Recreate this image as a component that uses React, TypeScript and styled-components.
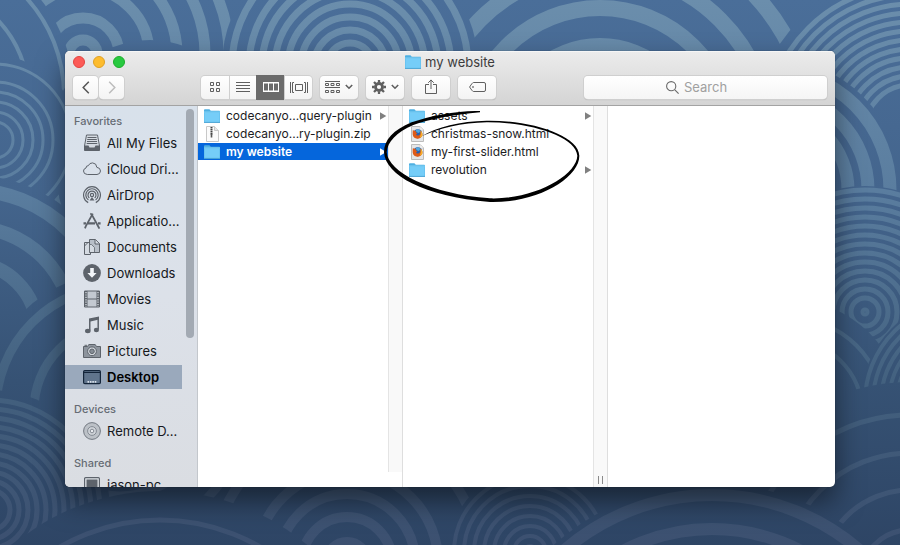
import React from 'react';
import styled, { createGlobalStyle, css } from 'styled-components';

const GlobalStyle = createGlobalStyle`
  *, *::before, *::after { box-sizing: border-box; }
  html, body, #root { height: 100%; }
  body {
    margin: 0;
    overflow: hidden;
    font-family: Inter, Roboto, sans-serif;
    font-size: 13px;
    color: #1c1c1e;
  }
  button { font: inherit; color: inherit; border: 0; margin: 0; padding: 0; background: none; text-align: left; }
  ul { list-style: none; margin: 0; padding: 0; }
`;

/* ---------- layout ---------- */

const Desktop = styled.main`
  position: relative;
  display: flex;
  height: 100%;
  padding: 51px 65px 58px;
  background: #3c597f;
`;

const Wallpaper = styled.svg`
  position: absolute;
  inset: 0;
  width: 100%;
  height: 100%;
`;

const Window = styled.section`
  position: relative;
  flex: 1;
  min-width: 0;
  display: flex;
  flex-direction: column;
  border-radius: 5px;
  overflow: hidden;
  background: #fff;
  box-shadow: 0 0 1px rgba(0, 0, 0, 0.5), 0 14px 28px rgba(0, 0, 0, 0.5);
`;

const Header = styled.header`
  flex: none;
  background: linear-gradient(#ececec, #d4d4d4);
  border-bottom: 1px solid #a3a3a3;
  box-shadow: inset 0 1px 0 #f6f6f6;
`;

const TitleBar = styled.div`
  display: grid;
  grid-template-columns: 1fr auto 1fr;
  align-items: center;
  height: 22px;
  padding: 0 8px;
`;

const Lights = styled.div`
  display: flex;
  gap: 8px;
`;

const Light = styled.button<{ $fill: string; $edge: string }>`
  width: 12px;
  height: 12px;
  border-radius: 50%;
  background: ${(p) => p.$fill};
  border: 1px solid ${(p) => p.$edge};
`;

const Title = styled.h1`
  display: flex;
  align-items: center;
  gap: 4px;
  margin: 0;
  font-size: 13px;
  font-weight: 400;
  line-height: 18px;
  color: #3c3c3c;
`;

const Toolbar = styled.div`
  display: flex;
  align-items: center;
  gap: 8px;
  height: 32px;
  padding: 0 8px 4px;
`;

const Group = styled.div<{ $space?: number }>`
  display: flex;
  gap: 1px;
  margin-right: ${(p) => p.$space ?? 0}px;
`;

const ToolButton = styled.button<{ $width: number; $active?: boolean; $edge?: 'left' | 'right' | 'none' }>`
  display: flex;
  align-items: center;
  justify-content: center;
  gap: 5px;
  width: ${(p) => p.$width}px;
  height: 23px;
  color: ${(p) => (p.$active ? '#fff' : '#5f5f5f')};
  background: ${(p) => (p.$active ? '#6b6b6b' : 'linear-gradient(#ffffff, #f3f3f3)')};
  box-shadow: 0 0 0 1px ${(p) => (p.$active ? '#6b6b6b' : '#cfcfcf')}, 0 1px 1px rgba(0, 0, 0, 0.25);
  border-radius: ${(p) =>
    p.$edge === 'left' ? '4px 0 0 4px' : p.$edge === 'right' ? '0 4px 4px 0' : p.$edge === 'none' ? '0' : '4px'};
`;

const SearchBox = styled.label`
  display: flex;
  align-items: center;
  gap: 5px;
  flex: 0 1 243px;
  min-width: 0;
  height: 23px;
  margin-left: auto;
  padding-left: 82px;
  border-radius: 4px;
  color: #6a6a6a;
  background: linear-gradient(#ffffff, #f5f5f5);
  box-shadow: 0 0 0 1px #cfcfcf, 0 1px 1px rgba(0, 0, 0, 0.2);
`;

const SearchInput = styled.input`
  flex: 1;
  min-width: 0;
  height: 20px;
  padding: 0;
  border: 0;
  outline: 0;
  background: none;
  font: inherit;
  &::placeholder { color: #a0a0a0; opacity: 1; }
`;

const Body = styled.div`
  flex: 1;
  min-height: 0;
  display: flex;
`;

/* ---------- sidebar ---------- */

const Sidebar = styled.nav`
  flex: none;
  display: flex;
  justify-content: space-between;
  width: 133px;
  overflow: hidden;
  border-right: 1px solid #c3c7cc;
  background: linear-gradient(#d8e1eb, #dce1e9 50%, #dadde2);
`;

const SideLists = styled.div`
  width: 117px;
  height: 0;
`;

const SideHeading = styled.h2<{ $first?: boolean }>`
  margin: 0;
  padding: ${(p) => (p.$first ? '6px' : '10px')} 0 0 9px;
  font-size: 11px;
  font-weight: 500;
  line-height: 18px;
  color: #666c74;
`;

const SideRow = styled.li`
  padding: 1px 0;
`;

const SideItem = styled.button<{ $selected?: boolean }>`
  display: flex;
  align-items: center;
  gap: 6px;
  width: 100%;
  height: 24px;
  padding-left: 18px;
  white-space: nowrap;
  color: #15181c;
  ${(p) => p.$selected && css`
    background: #9aa9bc;
    color: #000;
    font-weight: 600;
  `}
`;

const ScrollThumb = styled.div`
  width: 8px;
  height: 229px;
  margin: 3px 3px 0 0;
  border-radius: 4px;
  background: #a3aab3;
`;

/* ---------- columns ---------- */

const Column = styled.div`
  position: relative;
  flex: 0 0 205px;
  display: flex;
`;

const FileList = styled.ul`
  flex: 1;
  min-width: 0;
  padding-top: 1px;
`;

const Gutter = styled.div<{ $short?: boolean }>`
  display: flex;
  align-items: flex-end;
  justify-content: center;
  width: 15px;
  border-right: 1px solid #dedede;
  color: #8a8a8a;
  &::before {
    content: '';
    align-self: stretch;
    width: 15px;
    margin-bottom: ${(p) => (p.$short ? '15px' : '0')};
    border-left: 1px solid #e4e4e4;
    background: #f9f9f9;
  }
  svg { position: absolute; right: 5px; bottom: 3px; }
`;

const FileRow = styled.button<{ $selected?: boolean }>`
  display: flex;
  align-items: center;
  width: 100%;
  height: 17px;
  margin-bottom: 1px;
  padding: 0 1px 0 6px;
  white-space: nowrap;
  ${(p) => p.$selected && css`
    color: #fff;
    background: #0566dc;
    font-weight: 600;
  `}
`;

const FileIcon = styled.span`
  display: flex;
  justify-content: center;
  flex: none;
  width: 16px;
  margin-right: 6px;
`;

const FileName = styled.span`
  flex: 1;
  font-size: 12px;
  line-height: 16px;
`;

const Preview = styled.div`
  flex: 1;
`;

const Marker = styled.svg`
  position: absolute;
  left: -23px;
  top: -1px;
  width: 220px;
  height: 105px;
  pointer-events: none;
  z-index: 1;
`;

/* ---------- icons ---------- */

const Folder = () => (
  <svg width="16" height="14" viewBox="0 0 16 14" aria-hidden="true">
    <path d="M0 1.2Q0 .3 .9 .3H5.4L6.8 1.8H15.2Q16 1.8 16 2.6V13.6H0Z" fill="#4fb0e2" />
    <path d="M.3 3.4H15.7V13H.3Z" fill="#75cdf8" />
    <path d="M0 3H16" stroke="#91dafc" strokeWidth=".8" />
    <path d="M0 13.4H16" stroke="#4ba5d5" />
  </svg>
);

const Zip = () => (
  <svg width="13" height="16" viewBox="0 0 13 16" aria-hidden="true">
    <path d="M.5 .5H8.5L12.5 4.5V15.5H.5Z" fill="#fbfbfb" stroke="#c8c8c8" />
    <path d="M8.5 .5V4.5H12.5" fill="#e8e8e8" stroke="#c8c8c8" />
    <path d="M5.5 1V9" stroke="#444" strokeWidth="2" strokeDasharray="1.5 .5" />
    <path d="M5.5 8V11.5" stroke="#555" strokeWidth="1.6" />
  </svg>
);

const Html = () => (
  <svg width="13" height="16" viewBox="0 0 13 16" aria-hidden="true">
    <path d="M.5 .5H9L12.5 4V15.5H.5Z" fill="#e5e6e8" stroke="#bcbcbc" />
    <path d="M9 .5V4H12.5Z" fill="#fff" stroke="#c9c9c9" strokeWidth=".6" />
    <circle cx="6.7" cy="7.8" r="4.5" fill="#2760ae" />
    <path d="M4.6 4.2Q7 2.8 9.4 4.8L8 7L5.6 6.2Z" fill="#51a9df" />
    <path d="M1.9 4L3.6 5L4.6 4.6L5 6.6L6.4 7.5L5 8.4Q5.8 10 8 9.2Q10 8 9.4 4.4Q12.1 7 11.2 10Q9.4 13.1 6.3 12.8Q2.2 12 1.7 8.4Q1.5 6 1.9 4Z" fill="#df5a17" />
    <path d="M9.4 4.4Q12.1 7 11.2 10Q10 11.6 8.8 11.8Q10.7 8.2 9.4 4.4Z" fill="#f6b22b" />
  </svg>
);

const Arrow = ({ fill = '#808080' }: { fill?: string }) => (
  <svg width="8" height="8" viewBox="0 0 8 8" aria-hidden="true"><path d="M1 .3L7.3 4L1 7.7Z" fill={fill} /></svg>
);

const Chevron = ({ dir, color }: { dir: 'left' | 'right'; color: string }) => (
  <svg width="8" height="13" viewBox="0 0 8 13" fill="none" stroke={color} strokeWidth="1.5" aria-hidden="true">
    <path d={dir === 'left' ? 'M6.8 .8L1.2 6.5L6.8 12.2' : 'M1.2 .8L6.8 6.5L1.2 12.2'} />
  </svg>
);

const Down = () => (
  <svg width="8" height="6" viewBox="0 0 8 6" fill="none" stroke="currentColor" strokeWidth="1.6" aria-hidden="true">
    <path d="M.8 1L4 4.2L7.2 1" />
  </svg>
);

const GridIcon = () => (
  <svg width="11" height="11" viewBox="0 0 11 11" fill="none" stroke="currentColor" aria-hidden="true">
    <path d="M.5 .5H3.5V3.5H.5ZM6.5 .5H9.5V3.5H6.5ZM.5 6.5H3.5V9.5H.5ZM6.5 6.5H9.5V9.5H6.5Z" />
  </svg>
);

const ListIcon = () => (
  <svg width="14" height="10" viewBox="0 0 14 10" stroke="currentColor" aria-hidden="true">
    <path d="M0 .5H14M0 3.5H14M0 6.5H14M0 9.5H14" />
  </svg>
);

const ColumnsIcon = () => (
  <svg width="16" height="10" viewBox="0 0 16 10" fill="none" stroke="currentColor" aria-hidden="true">
    <path d="M.5 0V10M15.5 0V10M5.5 0V10M10.5 0V10" />
    <path d="M0 .8H16M0 9.2H16" strokeWidth="1.6" />
  </svg>
);

const FlowIcon = () => (
  <svg width="18" height="11" viewBox="0 0 18 11" fill="none" stroke="currentColor" aria-hidden="true">
    <path d="M.5 0V11M17.5 0V11M4 .5H2.5V10.5H4M14 .5H15.5V10.5H14M5.5 2.5H12.5V8.5H5.5Z" />
  </svg>
);

const ArrangeIcon = () => (
  <svg width="15" height="13" viewBox="0 0 15 13" fill="none" stroke="currentColor" aria-hidden="true">
    <path d="M0 .5H15M0 6.5H15M.5 2.5H3.5V4.5H.5ZM6 2.5H9V4.5H6ZM11.5 2.5H14.5V4.5H11.5ZM.5 9.5H3.5V11.5H.5ZM6 9.5H9V11.5H6ZM11.5 9.5H14.5V11.5H11.5Z" />
  </svg>
);

const GearIcon = () => (
  <svg width="14" height="14" viewBox="0 0 14 14" fill="none" stroke="currentColor" aria-hidden="true">
    <circle cx="7" cy="7" r="3.5" strokeWidth="2.8" />
    <path d="M7 0V2.6M7 11.4V14M0 7H2.6M11.4 7H14M2 2L4 4M10 10L12 12M12 2L10 4M4 10L2 12" strokeWidth="2.3" />
  </svg>
);

const ShareIcon = () => (
  <svg width="12" height="16" viewBox="0 0 12 16" fill="none" stroke="currentColor" aria-hidden="true">
    <path d="M4 5.5H.5V14.5H11.5V5.5H8M6 .8V10M3.2 3.8L6 1L8.8 3.8" />
  </svg>
);

const TagIcon = () => (
  <svg width="17" height="10" viewBox="0 0 17 10" fill="none" stroke="currentColor" aria-hidden="true">
    <path d="M4.3 .5H15Q16.5 .5 16.5 2V8Q16.5 9.5 15 9.5H4.3Q3.5 9.5 .6 5Q3.5 .5 4.3 .5Z" />
    <circle cx="4" cy="5" r=".5" />
  </svg>
);

const SearchIcon = () => (
  <svg width="13" height="13" viewBox="0 0 13 13" fill="none" stroke="currentColor" strokeWidth="1.1" aria-hidden="true">
    <circle cx="5.2" cy="5.2" r="4.6" />
    <path d="M8.6 8.6L12.6 12.6" />
  </svg>
);

const SIDE_ICONS: Record<string, React.ReactNode> = {
  files: (
    <>
      <path d="M3.5 1H14.5L16.5 12V16.5H1.5V12Z" fill="#d4dae1" stroke="#5d636b" />
      <path d="M4.5 3.5H13.5M4.2 5.5H13.8M4 7.5H14M3.7 9.5H14.3" stroke="#5d636b" />
      <path d="M1.5 11.5H5.5L6.5 13.5H11.5L12.5 11.5H16.5V16.5H1.5Z" fill="#5d636b" />
    </>
  ),
  cloud: <path d="M4.3 14.5Q.5 14.2 .5 11Q.6 8.6 3 8Q3 5.6 5.3 5.7Q6.5 2.8 9.6 2.9Q13.6 3.2 13.8 7.3Q17.5 7.8 17.5 11Q17.3 14.3 14 14.5Z" stroke="#5d636b" />,
  airdrop: (
    <g stroke="#5d636b" strokeWidth="1.2">
      <path d="M5.2 16.6A8.4 8.4 0 1 1 12.8 16.6" />
      <path d="M5.4 14A6.2 6.2 0 1 1 12.6 14" />
      <path d="M6.3 12A4 4 0 1 1 11.7 12" />
      <circle cx="9" cy="9" r="1.6" />
      <path d="M9 11L6.5 14.5H11.5Z" fill="#5d636b" stroke="none" />
    </g>
  ),
  apps: (
    <g stroke="#5d636b" strokeWidth="1.8">
      <path d="M9.8 1.6L2.6 14.6L2 16.4M7.4 2.6L8.6 1.4M9.2 3.4L15.4 14.8L16.4 16.6" />
      <path d="M.5 11.3H3M5 11.3H12M15 11.3H17.6" strokeWidth="2.2" />
    </g>
  ),
  docs: (
    <g stroke="#5d636b" fill="#d4dae1">
      <path d="M1.5 4.5H7.5V16.5H1.5Z" />
      <path d="M6.5 1.5H12.5L16.5 5.5V14.5H6.5Z" fill="#b8bfc8" />
      <path d="M12 1.5V6H16.5M1.5 8L5 4.5" />
      <path d="M6.5 14V6.5H8.5L11.5 9.5V14" strokeWidth=".8" />
    </g>
  ),
  down: (
    <>
      <circle cx="9" cy="9" r="8.9" fill="#5d636b" />
      <path d="M7.2 4H10.8V9H13.6L9 13.8L4.4 9H7.2Z" fill="#f2f5f8" />
    </>
  ),
  film: (
    <>
      <path d="M1.5 1H16.5V17H1.5Z" fill="#c3c9d1" stroke="#5d636b" />
      <path d="M3 1V17M15 1V17" stroke="#5d636b" strokeWidth="3" />
      <path d="M3 2V17M15 2V17" stroke="#e2e6eb" strokeWidth="1.2" strokeDasharray="1.2 1.2" />
      <path d="M4 9H14" stroke="#5d636b" />
    </>
  ),
  music: (
    <>
      <path d="M6 2.6L16 .6V3.6L7.5 5.4V14.5H6Z" fill="#5d636b" />
      <path d="M15.2 1V13.4" stroke="#5d636b" strokeWidth="1.5" />
      <ellipse cx="4.8" cy="15" rx="2.8" ry="2.2" fill="#5d636b" />
      <ellipse cx="13.4" cy="14" rx="2.6" ry="2.2" fill="#5d636b" />
    </>
  ),
  camera: (
    <>
      <path d="M.5 4.5H4.5L5.8 2.5H12.2L13.5 4.5H17.5V15.5H.5Z" fill="#8d949d" stroke="#5d636b" />
      <path d="M1.5 3.3H4" stroke="#5d636b" />
      <circle cx="9" cy="9.3" r="4.4" fill="#d3d8de" stroke="#5d636b" />
      <circle cx="9" cy="9.3" r="2.3" fill="#868d96" stroke="#5d636b" />
    </>
  ),
  desktop: (
    <>
      <rect x=".6" y="2.6" width="16.8" height="13" rx="1.2" fill="#60748c" stroke="#14253a" strokeWidth="1.2" />
      <path d="M1 4.5H17" stroke="#14253a" />
      <path d="M4.5 13.8H13.8" stroke="#dae2eb" strokeWidth="1.7" strokeDasharray="1.6 .8" />
    </>
  ),
  disc: (
    <>
      <circle cx="9" cy="9" r="8.4" fill="#bcc1c7" stroke="#737982" />
      <circle cx="9" cy="9" r="4.4" fill="#d0d4d9" stroke="#858b94" />
      <circle cx="9" cy="9" r="1.8" fill="#e8ebef" stroke="#858b94" />
    </>
  ),
  computer: (
    <>
      <rect x="1.6" y="1.6" width="14.8" height="15" rx="1" fill="#e0e4e9" stroke="#5d636b" strokeWidth="1.2" />
      <rect x="3.5" y="3.5" width="11" height="12" fill="#5d636b" />
    </>
  ),
};

const SideIcon = ({ name }: { name: string }) => (
  <svg width="18" height="18" viewBox="0 0 18 18" fill="none" aria-hidden="true">{SIDE_ICONS[name]}</svg>
);

/* ---------- wallpaper ---------- */

type Wave = { x: number; y: number; base: number; width: number; radii: number[] };

const steps = (from: number, to: number, by: number) => {
  const out: number[] = [];
  for (let r = from; r <= to; r += by) out.push(r);
  return out;
};

const WAVES: Wave[] = [
  { x: 83, y: 54, base: 158, width: 11, radii: [14, 36, 66, 94, 122, 146] },
  { x: -80, y: 95, base: 154, width: 4, radii: [108, 144] },
  { x: 600, y: 140, base: 228, width: 16, radii: [60, 94, 132, 170, 212] },
  { x: 350, y: 66, base: 128, width: 7, radii: [10, 23, 36, 49, 62, 75, 88, 101, 118] },
  { x: 150, y: 140, base: 100, width: 5, radii: [] },
  { x: 910, y: 130, base: 156, width: 5, radii: steps(45, 150, 9) },
  { x: 770, y: 190, base: 132, width: 13, radii: [78, 98, 120] },
  { x: 865, y: 312, base: 126, width: 5, radii: [2, ...steps(14, 122, 9)] },
  { x: 100, y: 190, base: 100, width: 5, radii: [44, 66, 88] },
  { x: -5, y: 140, base: 84, width: 3, radii: [18, 28, 38, 48, 58, 76] },
  { x: -30, y: 330, base: 155, width: 14, radii: [67, 103, 140] },
  { x: 120, y: 410, base: 138, width: 9, radii: [86, 124] },
  { x: 790, y: 412, base: 112, width: 4, radii: [72, 94] },
  { x: 965, y: 402, base: 104, width: 4, radii: steps(44, 100, 8) },
  { x: 910, y: 580, base: 198, width: 5, radii: [50, 90, 127, 165] },
  { x: -10, y: 510, base: 120, width: 5, radii: steps(20, 116, 9) },
  { x: 347, y: 562, base: 145, width: 10, radii: [20, 45, 68, 91, 133] },
  { x: 530, y: 552, base: 82, width: 4, radii: steps(6, 76, 10) },
  { x: 712, y: 720, base: 236, width: 12, radii: [158, 191, 225] },
  { x: 160, y: 719, base: 228, width: 5, radii: [199] },
];

const Waves = () => (
  <Wallpaper viewBox="0 0 900 545" preserveAspectRatio="xMidYMid slice" aria-hidden="true">
    <defs>
      <linearGradient id="base" gradientUnits="userSpaceOnUse" x1="0" y1="0" x2="0" y2="545">
        <stop offset="0" stopColor="#4a6e99" />
        <stop offset=".35" stopColor="#44658d" />
        <stop offset=".7" stopColor="#365274" />
        <stop offset="1" stopColor="#2e4565" />
      </linearGradient>
      <linearGradient id="crest" gradientUnits="userSpaceOnUse" x1="0" y1="0" x2="0" y2="545">
        <stop offset="0" stopColor="#6b8eac" />
        <stop offset=".35" stopColor="#5a7d9f" />
        <stop offset=".7" stopColor="#43617f" />
        <stop offset="1" stopColor="#3c5070" />
      </linearGradient>
    </defs>
    <rect width="900" height="545" fill="url(#base)" />
    {WAVES.map((w, i) => (
      <g key={i} fill="none" stroke="url(#crest)" strokeWidth={w.width}>
        <circle cx={w.x} cy={w.y} r={w.base} fill="url(#base)" stroke="none" />
        {w.radii.map((r) => <circle key={r} cx={w.x} cy={w.y} r={r} />)}
      </g>
    ))}
  </Wallpaper>
);

/* ---------- data ---------- */

const SECTIONS = [
  {
    title: 'Favorites',
    items: [
      ['files', 'All My Files'], ['cloud', 'iCloud Dri...'], ['airdrop', 'AirDrop'], ['apps', 'Applicatio...'],
      ['docs', 'Documents'], ['down', 'Downloads'], ['film', 'Movies'], ['music', 'Music'],
      ['camera', 'Pictures'], ['desktop', 'Desktop'],
    ],
  },
  { title: 'Devices', items: [['disc', 'Remote D...']] },
  { title: 'Shared', items: [['computer', 'jason-pc']] },
];

type Entry = { name: string; kind: 'folder' | 'zip' | 'html'; selected?: boolean };

const FIRST: Entry[] = [
  { name: 'codecanyo...query-plugin', kind: 'folder' },
  { name: 'codecanyo...ry-plugin.zip', kind: 'zip' },
  { name: 'my website', kind: 'folder', selected: true },
];

const SECOND: Entry[] = [
  { name: 'assets', kind: 'folder' },
  { name: 'christmas-snow.html', kind: 'html' },
  { name: 'my-first-slider.html', kind: 'html' },
  { name: 'revolution', kind: 'folder' },
];

const Files = ({ entries }: { entries: Entry[] }) => (
  <FileList>
    {entries.map((e) => (
      <li key={e.name}>
        <FileRow $selected={e.selected}>
          <FileIcon>{e.kind === 'folder' ? <Folder /> : e.kind === 'zip' ? <Zip /> : <Html />}</FileIcon>
          <FileName>{e.name}</FileName>
          {e.kind === 'folder' && <Arrow fill={e.selected ? '#fff' : undefined} />}
        </FileRow>
      </li>
    ))}
  </FileList>
);

export default function App() {
  return (
    <>
      <GlobalStyle />
      <Desktop>
        <Waves />
        <Window>
          <Header>
            <TitleBar>
              <Lights>
                <Light $fill="#fc5b57" $edge="#e2443f" aria-label="Close" />
                <Light $fill="#fdbc2e" $edge="#dfa023" aria-label="Minimize" />
                <Light $fill="#28c940" $edge="#1dad2b" aria-label="Zoom" />
              </Lights>
              <Title><Folder />my website</Title>
            </TitleBar>
            <Toolbar>
              <Group $space={69}>
                <ToolButton $width={25} aria-label="Back"><Chevron dir="left" color="#555" /></ToolButton>
                <ToolButton $width={25} aria-label="Forward"><Chevron dir="right" color="#bdbdbd" /></ToolButton>
              </Group>
              <Group>
                <ToolButton $width={28} $edge="left" aria-label="Icons"><GridIcon /></ToolButton>
                <ToolButton $width={26} $edge="none" aria-label="List"><ListIcon /></ToolButton>
                <ToolButton $width={27} $edge="none" $active aria-label="Columns"><ColumnsIcon /></ToolButton>
                <ToolButton $width={27} $edge="right" aria-label="Cover Flow"><FlowIcon /></ToolButton>
              </Group>
              <ToolButton $width={38} aria-label="Arrange"><ArrangeIcon /><Down /></ToolButton>
              <ToolButton $width={38} aria-label="Action"><GearIcon /><Down /></ToolButton>
              <ToolButton $width={38} aria-label="Share"><ShareIcon /></ToolButton>
              <ToolButton $width={38} aria-label="Tags"><TagIcon /></ToolButton>
              <SearchBox>
                <SearchIcon />
                <SearchInput type="text" placeholder="Search" aria-label="Search" />
              </SearchBox>
            </Toolbar>
          </Header>
          <Body>
            <Sidebar>
              <SideLists>
                {SECTIONS.map((s, i) => (
                  <section key={s.title}>
                    <SideHeading $first={i === 0}>{s.title}</SideHeading>
                    <ul>
                      {s.items.map(([icon, label]) => (
                        <SideRow key={label}>
                          <SideItem $selected={label === 'Desktop'}><SideIcon name={icon} />{label}</SideItem>
                        </SideRow>
                      ))}
                    </ul>
                  </section>
                ))}
              </SideLists>
              <ScrollThumb />
            </Sidebar>
            <Column>
              <Files entries={FIRST} />
              <Gutter $short />
            </Column>
            <Column>
              <Files entries={SECOND} />
              <Gutter>
                <svg width="5" height="8" viewBox="0 0 5 8" stroke="currentColor" aria-hidden="true"><path d="M.5 0V8M4.5 0V8" /></svg>
              </Gutter>
              <Marker viewBox="0 0 660 315" aria-hidden="true">
                <path d="M300 18C240 15 150 32 95 52C40 75 12 105 12 142C16 210 130 275 330 291C470 294 598 220 598 152C596 90 450 45 320 47C240 49 170 65 125 94C175 70 245 54 320 52C450 51 588 95 592 152C590 212 460 284 330 280C150 268 24 200 20 142C22 110 50 82 100 60C150 42 220 30 300 22Z" />
              </Marker>
            </Column>
            <Preview />
          </Body>
        </Window>
      </Desktop>
    </>
  );
}
